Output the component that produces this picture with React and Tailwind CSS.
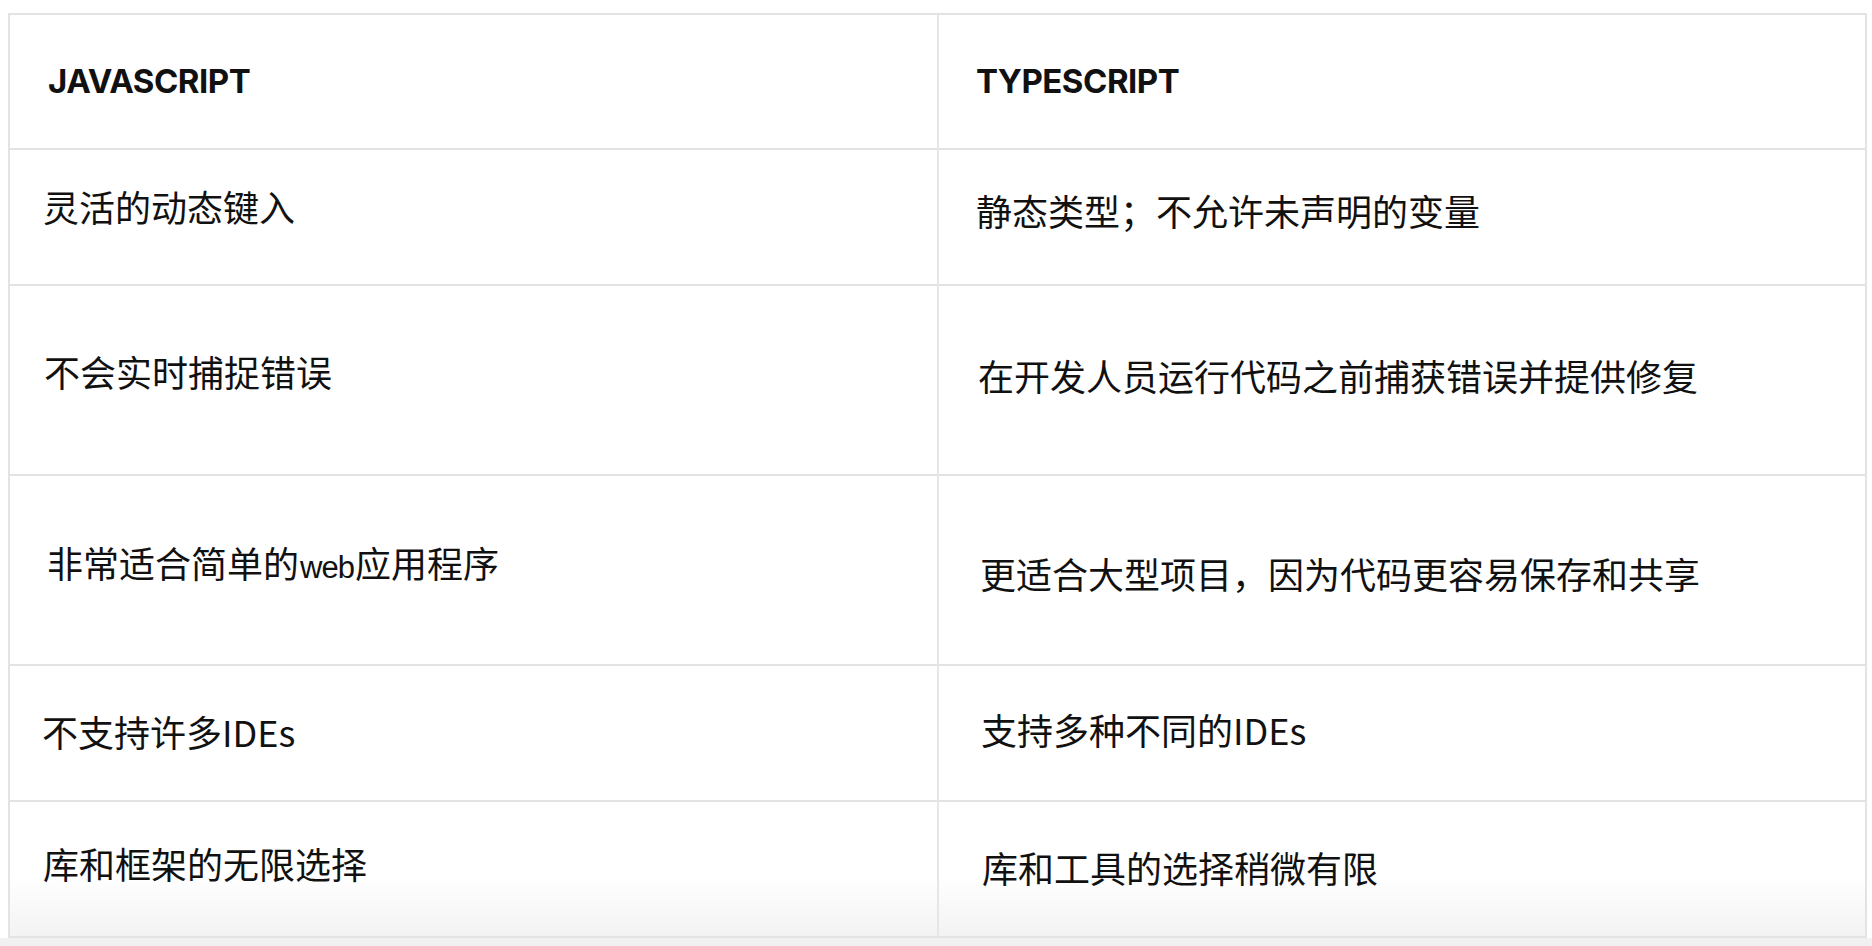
const rows = [
  {
    h: "h-[136px]",
    left: "灵活的动态键入",
    right: "静态类型；不允许未声明的变量",
    lp: "pl-[33px]",
    rp: "pl-[37px]",
    ly: "pb-[22px]",
    ry: "pb-[14px]",
  },
  {
    h: "h-[190px]",
    left: "不会实时捕捉错误",
    right: "在开发人员运行代码之前捕获错误并提供修复",
    lp: "pl-[34px]",
    rp: "pl-[39px]",
    ly: "pb-[18px]",
    ry: "pb-[10px]",
  },
  {
    h: "h-[190px]",
    left: (
      <>
        非常适合简单的
        <span
          className="text-[31px] tracking-[-1px] px-[1px]"
          style={{ fontFamily: '"Liberation Sans", Arial, sans-serif' }}
        >
          web
        </span>
        应用程序
      </>
    ),
    right: "更适合大型项目，因为代码更容易保存和共享",
    lp: "pl-[37px]",
    rp: "pl-[41px]",
    ly: "pb-[14px]",
    ry: "pt-[6px]",
  },
  {
    h: "h-[136px]",
    left: "不支持许多IDEs",
    right: "支持多种不同的IDEs",
    lp: "pl-[32px]",
    rp: "pl-[42px]",
    ly: "pb-[4px]",
    ry: "pb-[8px]",
  },
];

const last = {
  left: "库和框架的无限选择",
  right: "库和工具的选择稍微有限",
};

function Row({ row }) {
  return (
    <div className={`grid grid-cols-[929px_1fr] border-b-2 border-[#e3e3e3] ${row.h}`}>
      <div className={`flex items-center border-r-2 border-[#e6e6e6] ${row.lp} ${row.ly}`}>
        <span>{row.left}</span>
      </div>
      <div className={`flex items-center ${row.rp} ${row.ry}`}>
        <span>{row.right}</span>
      </div>
    </div>
  );
}

export default function App() {
  return (
    <div className="w-[1872px] h-[946px] bg-white overflow-hidden flex flex-col">
      <div className="pt-[13px] pl-[8px]">
        <div
          className="w-[1859px] border-2 border-[#e3e3e3] text-[36px] leading-none text-[#111]"
          style={{ fontFamily: '"Noto Sans CJK SC", "Noto Sans", sans-serif' }}
        >
          <div className="grid grid-cols-[929px_1fr] h-[135px] border-b-2 border-[#e3e3e3]">
            <div
              className="flex items-center border-r-2 border-[#e6e6e6] pl-[38px] text-[33px] font-bold tracking-[-0.5px]"
              style={{ fontFamily: 'Inter, "Liberation Sans", sans-serif' }}
            >
              JAVASCRIPT
            </div>
            <div
              className="flex items-center pl-[37px] text-[33px] font-bold tracking-[-0.5px]"
              style={{ fontFamily: 'Inter, "Liberation Sans", sans-serif' }}
            >
              TYPESCRIPT
            </div>
          </div>
          {rows.map((row, i) => (
            <Row key={i} row={row} />
          ))}
          <div className="grid grid-cols-[929px_1fr] h-[134px] bg-linear-to-b from-white from-55% to-[#f3f3f3]">
            <div className="flex items-center border-r-2 border-[#e6e6e6] pl-[33px] pb-[12px]">
              <span>{last.left}</span>
            </div>
            <div className="flex items-center pl-[43px] pb-[4px]">
              <span>{last.right}</span>
            </div>
          </div>
        </div>
      </div>
      <div className="flex-1 bg-[#f1f1f1]" />
    </div>
  );
}
